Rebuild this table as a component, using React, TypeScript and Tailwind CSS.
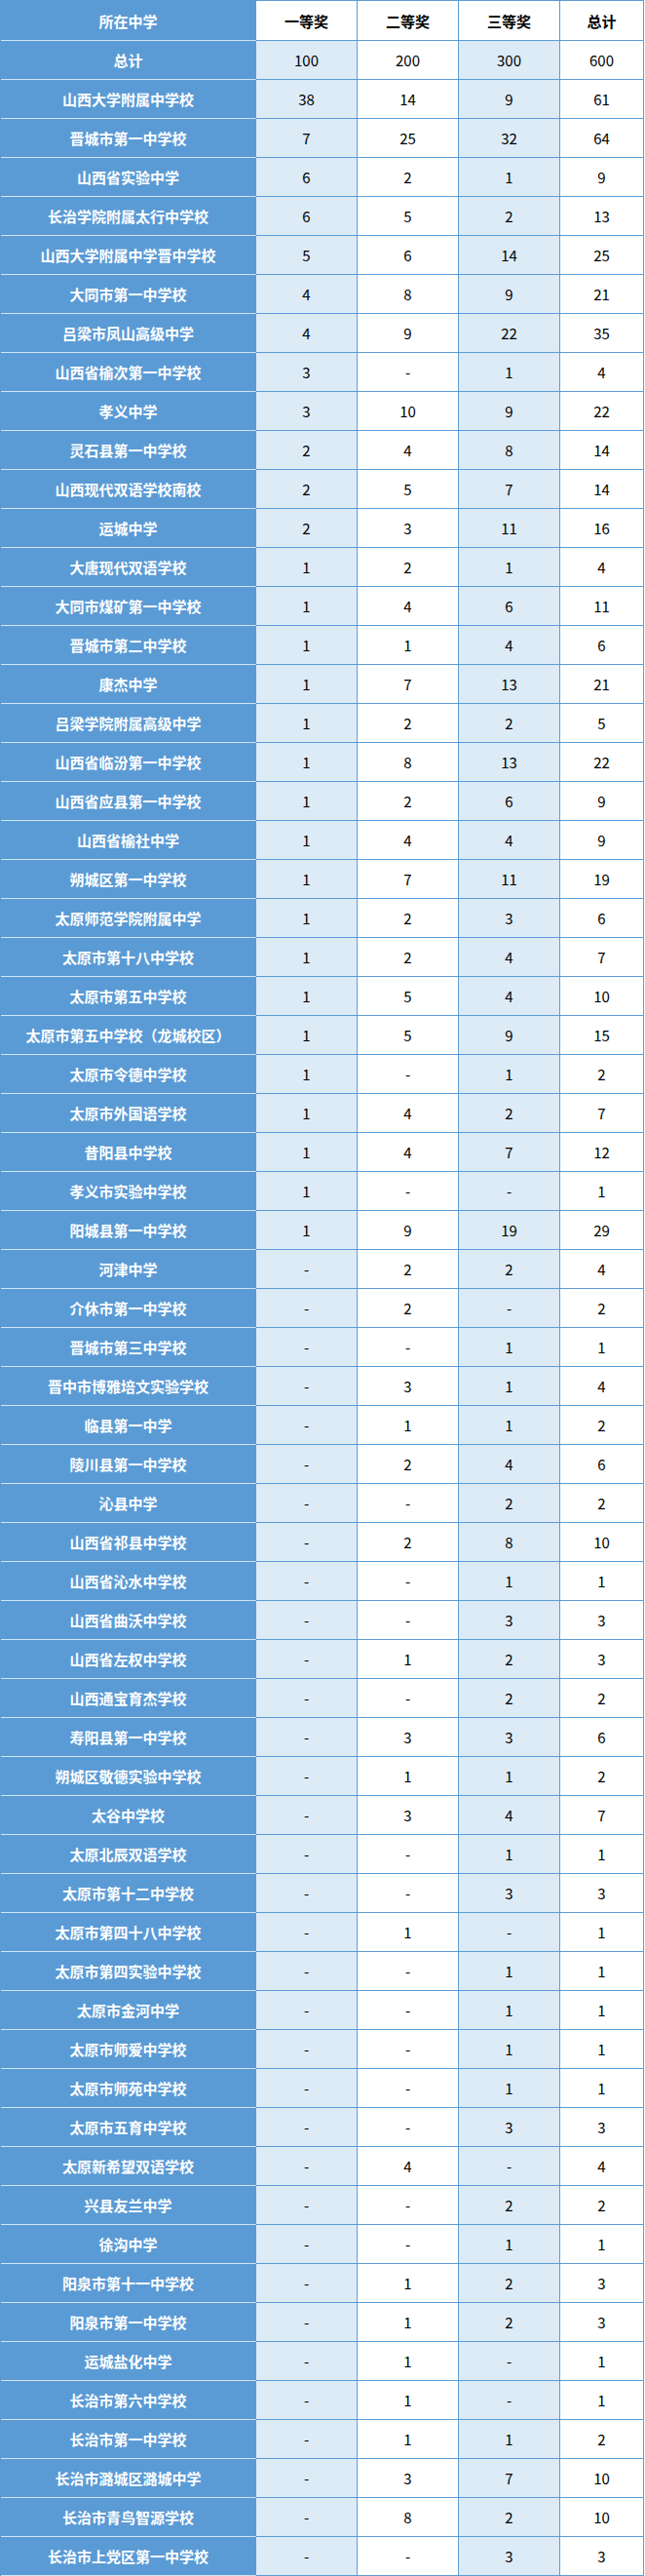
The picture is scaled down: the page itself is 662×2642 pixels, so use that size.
import React from "react";

type Row = [string, string, string, string, string];

const rows: Row[] = [
  ["山西大学附属中学校", "38", "14", "9", "61"],
  ["晋城市第一中学校", "7", "25", "32", "64"],
  ["山西省实验中学", "6", "2", "1", "9"],
  ["长治学院附属太行中学校", "6", "5", "2", "13"],
  ["山西大学附属中学晋中学校", "5", "6", "14", "25"],
  ["大同市第一中学校", "4", "8", "9", "21"],
  ["吕梁市凤山高级中学", "4", "9", "22", "35"],
  ["山西省榆次第一中学校", "3", "-", "1", "4"],
  ["孝义中学", "3", "10", "9", "22"],
  ["灵石县第一中学校", "2", "4", "8", "14"],
  ["山西现代双语学校南校", "2", "5", "7", "14"],
  ["运城中学", "2", "3", "11", "16"],
  ["大唐现代双语学校", "1", "2", "1", "4"],
  ["大同市煤矿第一中学校", "1", "4", "6", "11"],
  ["晋城市第二中学校", "1", "1", "4", "6"],
  ["康杰中学", "1", "7", "13", "21"],
  ["吕梁学院附属高级中学", "1", "2", "2", "5"],
  ["山西省临汾第一中学校", "1", "8", "13", "22"],
  ["山西省应县第一中学校", "1", "2", "6", "9"],
  ["山西省榆社中学", "1", "4", "4", "9"],
  ["朔城区第一中学校", "1", "7", "11", "19"],
  ["太原师范学院附属中学", "1", "2", "3", "6"],
  ["太原市第十八中学校", "1", "2", "4", "7"],
  ["太原市第五中学校", "1", "5", "4", "10"],
  ["太原市第五中学校（龙城校区）", "1", "5", "9", "15"],
  ["太原市令德中学校", "1", "-", "1", "2"],
  ["太原市外国语学校", "1", "4", "2", "7"],
  ["昔阳县中学校", "1", "4", "7", "12"],
  ["孝义市实验中学校", "1", "-", "-", "1"],
  ["阳城县第一中学校", "1", "9", "19", "29"],
  ["河津中学", "-", "2", "2", "4"],
  ["介休市第一中学校", "-", "2", "-", "2"],
  ["晋城市第三中学校", "-", "-", "1", "1"],
  ["晋中市博雅培文实验学校", "-", "3", "1", "4"],
  ["临县第一中学", "-", "1", "1", "2"],
  ["陵川县第一中学校", "-", "2", "4", "6"],
  ["沁县中学", "-", "-", "2", "2"],
  ["山西省祁县中学校", "-", "2", "8", "10"],
  ["山西省沁水中学校", "-", "-", "1", "1"],
  ["山西省曲沃中学校", "-", "-", "3", "3"],
  ["山西省左权中学校", "-", "1", "2", "3"],
  ["山西通宝育杰学校", "-", "-", "2", "2"],
  ["寿阳县第一中学校", "-", "3", "3", "6"],
  ["朔城区敬德实验中学校", "-", "1", "1", "2"],
  ["太谷中学校", "-", "3", "4", "7"],
  ["太原北辰双语学校", "-", "-", "1", "1"],
  ["太原市第十二中学校", "-", "-", "3", "3"],
  ["太原市第四十八中学校", "-", "1", "-", "1"],
  ["太原市第四实验中学校", "-", "-", "1", "1"],
  ["太原市金河中学", "-", "-", "1", "1"],
  ["太原市师爱中学校", "-", "-", "1", "1"],
  ["太原市师苑中学校", "-", "-", "1", "1"],
  ["太原市五育中学校", "-", "-", "3", "3"],
  ["太原新希望双语学校", "-", "4", "-", "4"],
  ["兴县友兰中学", "-", "-", "2", "2"],
  ["徐沟中学", "-", "-", "1", "1"],
  ["阳泉市第十一中学校", "-", "1", "2", "3"],
  ["阳泉市第一中学校", "-", "1", "2", "3"],
  ["运城盐化中学", "-", "1", "-", "1"],
  ["长治市第六中学校", "-", "1", "-", "1"],
  ["长治市第一中学校", "-", "1", "1", "2"],
  ["长治市潞城区潞城中学", "-", "3", "7", "10"],
  ["长治市青鸟智源学校", "-", "8", "2", "10"],
  ["长治市上党区第一中学校", "-", "-", "3", "3"],
];

const FONT = { fontFamily: '"Noto Sans CJK SC", "Microsoft YaHei", sans-serif' };

function DataRow({ r, header }: { r: Row; header?: boolean }) {
  const h = header ? "h-[41px]" : "h-[40px]";
  const light = header ? "bg-white" : "bg-[#ddebf7]";
  return (
    <div className="grid grid-cols-[262px_104px_104px_104px_86px]">
      <div
        className={`${h} flex items-center justify-center bg-[#5b9bd5] border-r border-r-[#5b9bd5] border-b border-b-[#d2e4f5] text-white font-bold text-[15px] whitespace-nowrap`}
      >
        {r[0]}
      </div>
      <div
        className={`${h} flex items-center justify-center ${light} border-r border-b border-[#5b9bd5] text-black text-[15px] ${header ? "font-bold" : ""}`}
      >
        {r[1]}
      </div>
      <div
        className={`${h} flex items-center justify-center bg-white border-r border-b border-[#5b9bd5] text-black text-[15px] ${header ? "font-bold" : ""}`}
      >
        {r[2]}
      </div>
      <div
        className={`${h} flex items-center justify-center ${light} border-r border-b border-[#5b9bd5] text-black text-[15px] ${header ? "font-bold" : ""}`}
      >
        {r[3]}
      </div>
      <div
        className={`${h} flex items-center justify-center bg-white border-r border-b border-[#5b9bd5] text-black text-[15px] ${header ? "font-bold" : ""}`}
      >
        {r[4]}
      </div>
    </div>
  );
}

export default function App() {
  return (
    <div className="w-[662px] bg-white" style={FONT}>
      <div className="w-[661px] border-t border-l border-[#5b9bd5] leading-none">
        <DataRow r={["所在中学", "一等奖", "二等奖", "三等奖", "总计"]} header />
        <DataRow r={["总计", "100", "200", "300", "600"]} />
        {rows.map((r, i) => (
          <DataRow key={i} r={r} />
        ))}
      </div>
    </div>
  );
}
